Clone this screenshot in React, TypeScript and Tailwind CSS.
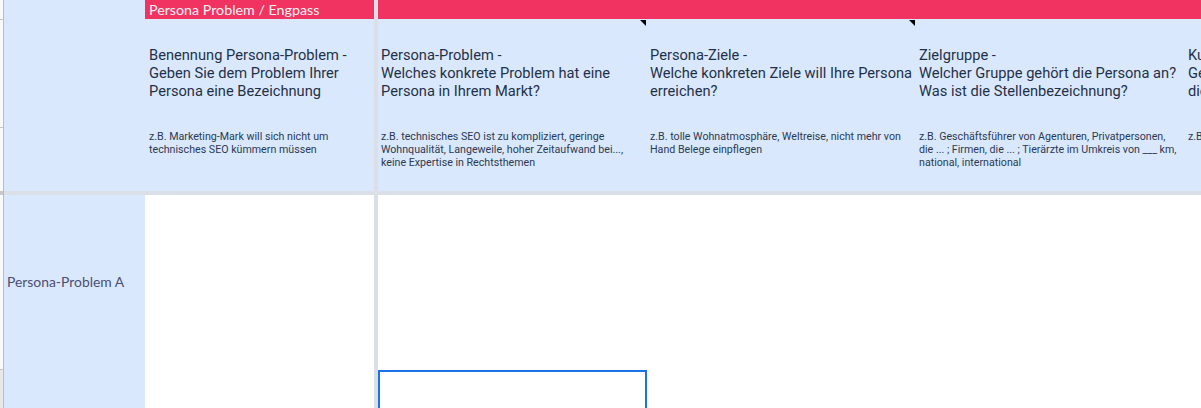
const roboto = "font-['Roboto',sans-serif]";

interface HeaderCellProps {
  lines: string[];
  example: string[];
  note?: boolean;
  pad?: string;
}

function HeaderCell({ lines, example, note, pad = "pl-[3px]" }: HeaderCellProps) {
  return (
    <div className={`relative bg-[#dae8fe] pt-[27px] ${pad} ${roboto}`}>
      {note && (
        <div className="absolute right-px top-px h-[6px] w-[6px] bg-black [clip-path:polygon(0_0,100%_0,100%_100%)]" />
      )}
      <div className="whitespace-nowrap text-[14.67px] leading-[18px] text-[#1f3148]">
        {lines.map((line) => (
          <div key={line}>{line}</div>
        ))}
      </div>
      <div className="mt-[30px] whitespace-nowrap text-[10.67px] leading-[13px] text-[#2b3a52]">
        {example.map((line) => (
          <div key={line}>{line}</div>
        ))}
      </div>
    </div>
  );
}

export default function App() {
  return (
    <div className="flex h-[408px] w-[1201px] overflow-hidden bg-white">
      <div className="flex w-[4px] shrink-0 flex-col border-r border-[#bdbdbd] bg-[#f8f9fa]">
        <div className="h-[20px] border-b border-[#c4c4c4]" />
        <div className="h-[108px] border-b border-[#c4c4c4]" />
        <div className="h-[63px]" />
        <div className="h-[4px] bg-[#c8c8c8]" />
        <div className="h-[175px] border-b border-[#c4c4c4]" />
        <div className="flex-1 bg-[#e8e8e8]" />
      </div>

      <div className="grid shrink-0 grid-cols-[141px_229px_4px_269px_269px_269px_269px] grid-rows-[19px_172px_4px_213px]">
        <div className="row-span-2 bg-[#dae8fe]" />
        <div className="flex items-center bg-[#f03360] pl-1 font-['Lato',sans-serif] text-[14.25px] leading-[19px] text-[#fff1f4]">
          Persona Problem / Engpass
        </div>
        <div className="row-span-4 bg-[#dadfe8]" />
        <div className="col-span-4 bg-[#f03360]" />

        <HeaderCell
          pad="pl-1"
          lines={["Benennung Persona-Problem -", "Geben Sie dem Problem Ihrer", "Persona eine Bezeichnung"]}
          example={["z.B. Marketing-Mark will sich nicht um", "technisches SEO kümmern müssen"]}
        />
        <HeaderCell
          note
          lines={["Persona-Problem -", "Welches konkrete Problem hat eine", "Persona in Ihrem Markt?"]}
          example={[
            "z.B. technisches SEO ist zu kompliziert, geringe",
            "Wohnqualität, Langeweile, hoher Zeitaufwand bei...,",
            "keine Expertise in Rechtsthemen",
          ]}
        />
        <HeaderCell
          note
          lines={["Persona-Ziele -", "Welche konkreten Ziele will Ihre Persona", "erreichen?"]}
          example={["z.B. tolle Wohnatmosphäre, Weltreise, nicht mehr von", "Hand Belege einpflegen"]}
        />
        <HeaderCell
          lines={["Zielgruppe -", "Welcher Gruppe gehört die Persona an?", "Was ist die Stellenbezeichnung?"]}
          example={[
            "z.B. Geschäftsführer von Agenturen, Privatpersonen,",
            "die ... ; Firmen, die ... ; Tierärzte im Umkreis von ___ km,",
            "national, international",
          ]}
        />
        <HeaderCell lines={["Kunden -", "Gehört", "die"]} example={["z.B."]} />

        <div className="col-span-2 bg-[#dadfe8]" />
        <div className="col-span-4 bg-[#dadfe8]" />

        <div className="bg-[#dae8fe]">
          <div className="flex h-[175px] items-center pl-[3px] font-['Lato',sans-serif] text-[13.9px] text-[#4a4f72]">
            Persona-Problem A
          </div>
        </div>
        <div className="bg-white" />
        <div className="relative bg-white">
          <div className="absolute left-0 right-0 top-[175px] h-[60px] border-2 border-[#1a73e8]" />
        </div>
        <div className="col-span-3 bg-white" />
      </div>
    </div>
  );
}
